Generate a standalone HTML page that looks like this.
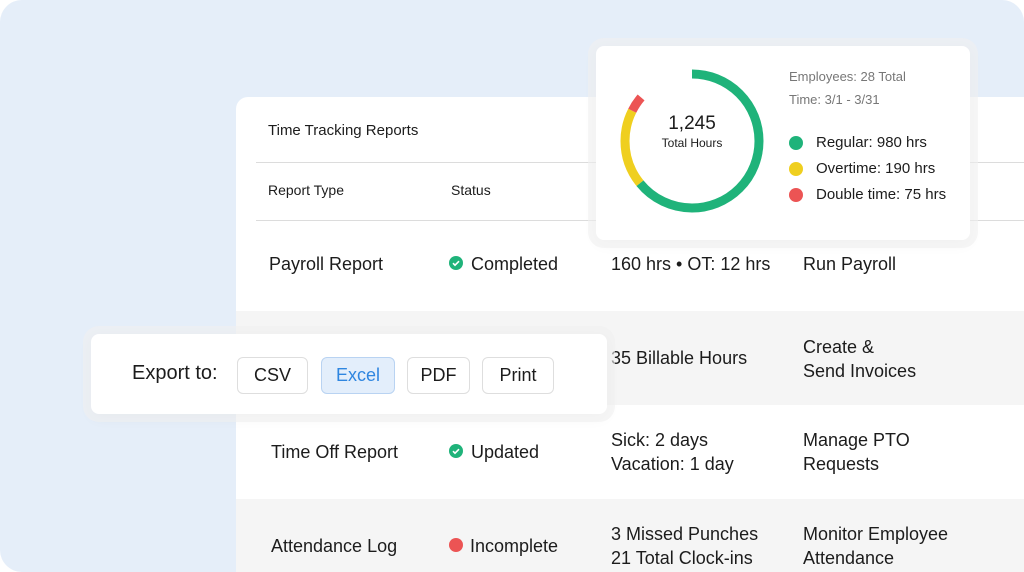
<!DOCTYPE html>
<html style="width:1024px;height:572px;overflow:hidden"><head><meta charset="utf-8"><style>
*{margin:0;padding:0;box-sizing:border-box}
body{width:1024px;height:572px;overflow:hidden;background:#fff;font-family:"Liberation Sans",sans-serif;color:#1c1c1c;position:relative}
.bg{position:absolute;left:0;top:0;width:1024px;height:572px;background:#e5eef9;border-radius:22px 22px 0 22px}
.panel{position:absolute;left:236px;top:97px;width:788px;height:475px;background:#fff;border-radius:12px 0 0 0}
.row{position:absolute;left:236px;width:788px}
.t{position:absolute;white-space:nowrap}
.line{position:absolute;left:256px;width:768px;height:1px;background:#dcdcdc}
.card{position:absolute;background:#fff;border-radius:8px;box-shadow:0 0 0 8px rgba(240,240,240,0.6),0 4px 14px rgba(0,0,0,0.05)}
.btn{position:absolute;top:357px;height:37px;border:1px solid #dedede;border-radius:6px;background:#fff;font-size:18px;text-align:center;line-height:35px}
.chk{display:inline-block;width:14px;height:14px;border-radius:50%;background:#1fb37a;vertical-align:middle;position:relative;margin-right:8px;top:-2px}
.dot{display:inline-block;width:14px;height:14px;border-radius:50%;vertical-align:middle}
</style></head><body>
<div class="bg"></div>
<div class="panel"></div>
<div class="row" style="top:311px;height:94px;background:#f5f5f5"></div>
<div class="row" style="top:499px;height:73px;background:#f5f5f5"></div>
<div class="line" style="top:162px"></div>
<div class="line" style="top:220px"></div>
<div class="t" style="left:268px;top:122px;font-size:15px">Time Tracking Reports</div>
<div class="t" style="left:268px;top:182px;font-size:14px">Report Type</div>
<div class="t" style="left:451px;top:182px;font-size:14px">Status</div>

<div class="t" style="left:269px;top:254px;font-size:18px">Payroll Report</div>
<div class="t" style="left:449px;top:254px;font-size:18px"><span class="chk"><svg width="14" height="14" style="position:absolute;left:0;top:0"><path d="M4 7.2l2 2 4-4" stroke="#fff" stroke-width="1.6" fill="none"/></svg></span>Completed</div>
<div class="t" style="left:611px;top:254px;font-size:18px">160 hrs • OT: 12 hrs</div>
<div class="t" style="left:803px;top:254px;font-size:18px">Run Payroll</div>

<div class="t" style="left:611px;top:348px;font-size:18px">35 Billable Hours</div>
<div class="t" style="left:803px;top:335px;font-size:18px;line-height:24px">Create &amp;<br>Send Invoices</div>

<div class="t" style="left:271px;top:442px;font-size:18px">Time Off Report</div>
<div class="t" style="left:449px;top:442px;font-size:18px"><span class="chk"><svg width="14" height="14" style="position:absolute;left:0;top:0"><path d="M4 7.2l2 2 4-4" stroke="#fff" stroke-width="1.6" fill="none"/></svg></span>Updated</div>
<div class="t" style="left:611px;top:428px;font-size:18px;line-height:24px">Sick: 2 days<br>Vacation: 1 day</div>
<div class="t" style="left:803px;top:428px;font-size:18px;line-height:24px">Manage PTO<br>Requests</div>

<div class="t" style="left:271px;top:536px;font-size:18px">Attendance Log</div>
<div class="t" style="left:449px;top:536px;font-size:18px"><span class="dot" style="background:#ec5454;margin-right:7px;position:relative;top:-2px"></span>Incomplete</div>
<div class="t" style="left:611px;top:522px;font-size:18px;line-height:24px">3 Missed Punches<br>21 Total Clock-ins</div>
<div class="t" style="left:803px;top:522px;font-size:18px;line-height:24px">Monitor Employee<br>Attendance</div>

<div class="card" style="left:91px;top:334px;width:516px;height:80px"></div>
<div class="t" style="left:132px;top:362px;font-size:20px">Export to:</div>
<div class="btn" style="left:237px;width:71px">CSV</div>
<div class="btn" style="left:321px;width:74px;background:#e3eefb;border-color:#b9d3f2;color:#2f86e0">Excel</div>
<div class="btn" style="left:407px;width:63px">PDF</div>
<div class="btn" style="left:482px;width:72px">Print</div>

<div class="card" style="left:596px;top:46px;width:374px;height:194px"></div>
<svg style="position:absolute;left:616px;top:65px" width="152" height="152">
<g transform="rotate(-90 76 76)" fill="none" stroke-width="9">
<circle cx="76" cy="76" r="67" stroke="#1fb37a" stroke-dasharray="270 500"/>
<circle cx="76" cy="76" r="67" stroke="#efcf1f" stroke-dasharray="0 270 77 500"/>
<circle cx="76" cy="76" r="67" stroke="#ec5454" stroke-dasharray="0 347 16 500"/>
</g></svg>
<div class="t" style="left:632px;top:113px;width:120px;text-align:center;font-size:19px">1,245</div>
<div class="t" style="left:632px;top:136px;width:120px;text-align:center;font-size:12px">Total Hours</div>
<div class="t" style="left:789px;top:69px;font-size:13px;color:#777">Employees: 28 Total</div>
<div class="t" style="left:789px;top:92px;font-size:13px;color:#777">Time: 3/1 - 3/31</div>
<div class="t" style="left:789px;top:134px;font-size:15px"><span class="dot" style="background:#1fb37a;margin-right:13px"></span>Regular: 980 hrs</div>
<div class="t" style="left:789px;top:160px;font-size:15px"><span class="dot" style="background:#efcf1f;margin-right:13px"></span>Overtime: 190 hrs</div>
<div class="t" style="left:789px;top:186px;font-size:15px"><span class="dot" style="background:#ec5454;margin-right:13px"></span>Double time: 75 hrs</div>
</body></html>
